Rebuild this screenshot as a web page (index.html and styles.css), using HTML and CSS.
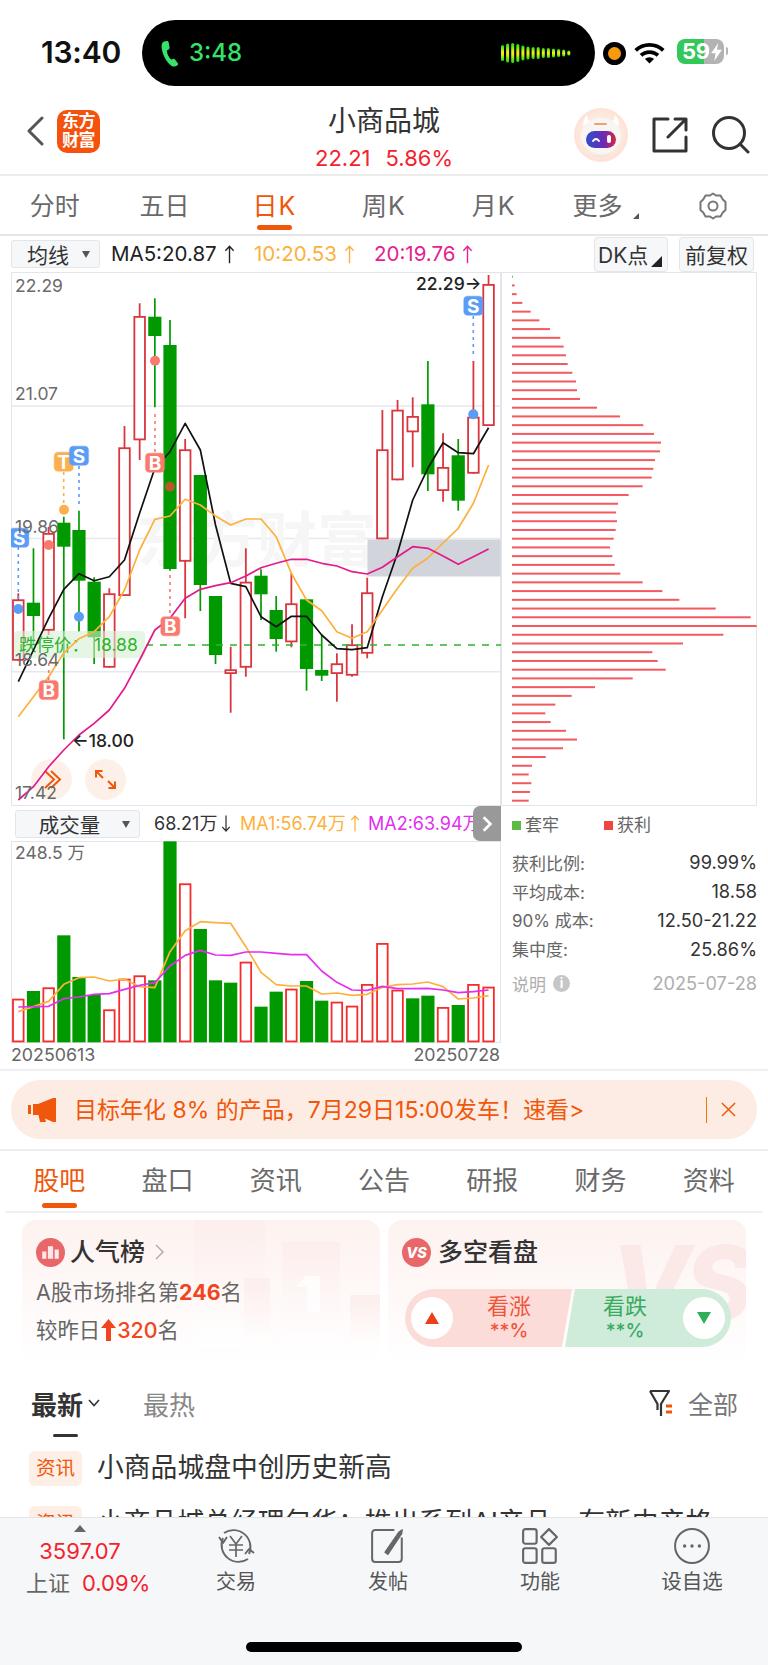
FILE: index.html
```html
<!DOCTYPE html>
<html lang="zh">
<head>
<meta charset="utf-8">
<title>小商品城</title>
<link rel="stylesheet" href="styles.css">
</head>
<body>
<div class="page">
  <div class="status">
    <div class="time">13:40</div>
    <div class="island">
      <svg class="phone" viewBox="0 0 20 27"><path d="M4 1.5 L7 1 C8 1 8.5 1.6 8.7 2.6 L9.6 7.6 C9.7 8.4 9.3 9 8.6 9.4 L6.8 10.4 C7 13.5 8.8 17.4 11.2 19.6 L13 18.9 C13.8 18.6 14.5 18.8 15 19.5 L17.8 23.2 C18.3 24 18.2 24.7 17.5 25.2 L15.8 26.2 C14 27 12 26.5 10.4 25 C5.4 20.6 2 13.6 1.6 6.8 C1.5 4.2 2.2 2.4 4 1.5 Z"/></svg>
      <span class="call">3:48</span>
      <svg class="wave" viewBox="0 0 72 20">
        <defs><linearGradient id="wg" x1="0" y1="0" x2="0" y2="1"><stop offset="0" stop-color="#10e010"/><stop offset=".42" stop-color="#e6f018"/><stop offset=".58" stop-color="#e6f018"/><stop offset="1" stop-color="#10e010"/></linearGradient></defs>
        <g id="wavebars"></g>
      </svg>
    </div>
    <div class="rec"><span class="rec-dot"></span></div>
    <svg class="wifi" viewBox="0 0 33 24"><path d="M16.5 3C10.6 3 5.4 5.3 1.4 9L4 11.7C7.3 8.7 11.7 6.8 16.5 6.8S25.7 8.7 29 11.7L31.6 9C27.6 5.3 22.4 3 16.5 3Z"/><path d="M16.5 10.2C12.7 10.2 9.4 11.6 6.7 14L9.4 16.8C11.3 15.1 13.8 14.1 16.5 14.1S21.7 15.1 23.6 16.8L26.3 14C23.6 11.6 20.3 10.2 16.5 10.2Z"/><path d="M16.5 17.2C14.7 17.2 13.2 17.9 12 19L16.5 23.6 21 19C19.8 17.9 18.3 17.2 16.5 17.2Z"/></svg>
    <div class="battery"><span class="batt-num">59</span><svg class="bolt" viewBox="0 0 12 20"><path d="M8 0 L0 11.5 H5 L3.5 20 L12 7.5 H6.5 Z"/></svg></div>
    <span class="batt-tip"></span>
  </div>

  <header class="head">
    <div class="head-left">
      <svg class="back" viewBox="0 0 18 30"><path d="M16 2 L3 15 L16 28"/></svg>
      <div class="logo">东方<br>财富</div>
    </div>
    <div class="head-mid">
      <div class="stock">小商品城</div>
      <div class="price"><span>22.21</span><span>5.86%</span></div>
    </div>
    <div class="head-right">
      <svg class="avatar" viewBox="0 0 54 54">
        <defs>
          <radialGradient id="ag" cx=".5" cy=".5" r=".55"><stop offset="0" stop-color="#fffaf6"/><stop offset="1" stop-color="#fde0d2"/></radialGradient>
          <linearGradient id="vg" x1="0" y1="0" x2="1" y2="0"><stop offset="0" stop-color="#2e4fc9"/><stop offset=".6" stop-color="#6a2bb5"/><stop offset="1" stop-color="#d8263f"/></linearGradient>
        </defs>
        <circle cx="27" cy="27" r="27" fill="url(#ag)"/>
        <path d="M9 18 C9 12 11 9 13 7 C13 11 15 13 17 14 Z M45 18 C45 12 43 9 41 7 C41 11 39 13 37 14 Z" fill="#fff"/>
        <ellipse cx="27" cy="28" rx="20" ry="18" fill="#f8f6f5"/>
        <rect x="20" y="15" width="13" height="2" rx="1" fill="#f0a06b"/>
        <rect x="12" y="23" width="30" height="17" rx="8.5" fill="url(#vg)"/>
        <path d="M19 33 Q22 29 25 33" class="av-eye"/>
        <rect x="33" y="27" width="4" height="8" rx="2" fill="#fff"/>
        <path d="M16 46 Q27 50 38 46 Q27 53 16 46Z" fill="#e8e4e2"/>
      </svg>
      <svg class="share" viewBox="0 0 36 36"><path d="M16 2 H2 V34 H34 V20"/><path d="M16 20 L34 2 M23 2 H34 V13"/></svg>
      <svg class="search" viewBox="0 0 38 38"><circle cx="17" cy="17" r="15.5"/><path d="M28 28 L36 36"/></svg>
    </div>
  </header>

  <nav class="periods">
    <div class="ptab"><span>分时</span></div>
    <div class="ptab"><span>五日</span></div>
    <div class="ptab on"><span class="kk">日K</span><i class="bar"></i></div>
    <div class="ptab"><span class="kk">周K</span></div>
    <div class="ptab"><span class="kk">月K</span></div>
    <div class="ptab more"><span>更多</span><i class="corner"></i></div>
    <div class="ptab">
      <svg class="gear" viewBox="0 0 28 28"><path d="M14 1.5 L17 3.5 L21.5 3.5 L23.8 7.5 L26.5 10 L26.5 18 L23.8 20.5 L21.5 24.5 L17 24.5 L14 26.5 L11 24.5 L6.5 24.5 L4.2 20.5 L1.5 18 L1.5 10 L4.2 7.5 L6.5 3.5 L11 3.5 Z"/><circle cx="14" cy="14" r="4.5"/></svg>
    </div>
  </nav>

  <div class="tools">
    <div class="sel sel-ma">均线<i class="tri"></i></div>
    <span class="ma m5">MA5:20.87<svg class="ar" viewBox="0 0 12 20"><path d="M6 19.5V1M1.5 6L6 1L10.5 6"/></svg></span>
    <span class="ma m10">10:20.53<svg class="ar" viewBox="0 0 12 20"><path d="M6 19.5V1M1.5 6L6 1L10.5 6"/></svg></span>
    <span class="ma m20">20:19.76<svg class="ar" viewBox="0 0 12 20"><path d="M6 19.5V1M1.5 6L6 1L10.5 6"/></svg></span>
    <div class="btn btn-dk">DK点<i class="corner big"></i></div>
    <div class="btn btn-fq">前复权</div>
  </div>

  <section class="charts">
    <div class="col-k">
      <svg class="kline" viewBox="11 272 490 534">
        <rect x="11.5" y="272.5" width="489" height="533" class="frame"/>
        <path d="M11 406H501M11 538.5H501M11 671.7H501" class="grid"/>
        <text x="137" y="562" class="wm">东方财富</text>
        <rect x="367.5" y="539.5" width="133" height="37" class="pressure"/>
        <g id="candles"></g>
        <rect x="14" y="631" width="131" height="27" rx="4" class="limit-bg"/>
        <text x="19" y="651" class="limit">跌停价： 18.88</text>
        <path d="M146 645H501" class="limit-line"/>
        <circle cx="51.5" cy="779.5" r="20.5" class="cbtn"/>
        <path d="M45 771 L54 779.5 L45 788 M51 771 L60 779.5 L51 788" class="cicon"/>
        <circle cx="105.5" cy="779.5" r="20.5" class="cbtn"/>
        <path d="M96 771 L103 778 M96 777.5V771H102.5 M115 788 L108 781 M115 781.5V788H108.5" class="cicon"/>
        <g id="ma"></g>
        <g id="marks"></g>
        <text x="15" y="291.5" class="ax">22.29</text>
        <text x="15" y="400" class="ax">21.07</text>
        <text x="15" y="533" class="ax">19.86</text>
        <text x="15" y="666" class="ax">18.64</text>
        <text x="15" y="799" class="ax">17.42</text>
        <text x="416" y="290" class="hl">22.29→</text>
        <text x="72" y="747" class="hl">←18.00</text>
      </svg>
      <div class="vtools">
        <div class="sel sel-vol">成交量<i class="tri"></i></div>
        <span class="vm v0">68.21万<svg class="ar" viewBox="0 0 12 20"><path d="M6 .5V19M1.5 14L6 19L10.5 14"/></svg></span>
        <span class="vm v1">MA1:56.74万<svg class="ar" viewBox="0 0 12 20"><path d="M6 19.5V1M1.5 6L6 1L10.5 6"/></svg></span>
        <span class="vm v2">MA2:63.94万<svg class="ar" viewBox="0 0 12 20"><path d="M6 19.5V1M1.5 6L6 1L10.5 6"/></svg></span>
      </div>
      <svg class="vol" viewBox="11 841 490 203">
        <rect x="11.5" y="841.5" width="489" height="201" class="frame"/>
        <g id="vbars"></g>
        <text x="15" y="859" class="ax">248.5 万</text>
      </svg>
      <div class="dates"><span>20250613</span><span>20250728</span></div>
      <div class="fold"><svg viewBox="0 0 10 16"><path d="M2 2 L8 8 L2 14"/></svg></div>
    </div>
    <div class="col-chip">
      <svg class="chip" viewBox="501 272 256 534">
        <rect x="501.5" y="272.5" width="255" height="533" class="frame"/>
        <g id="chipbars"></g>
      </svg>
      <div class="legend">
        <span class="lg"><i class="sq sq-g"></i>套牢</span>
        <span class="lg"><i class="sq sq-r"></i>获利</span>
      </div>
      <dl class="stats">
        <div class="row"><dt>获利比例:</dt><dd>99.99%</dd></div>
        <div class="row"><dt>平均成本:</dt><dd>18.58</dd></div>
        <div class="row"><dt>90% 成本:</dt><dd>12.50-21.22</dd></div>
        <div class="row"><dt>集中度:</dt><dd>25.86%</dd></div>
      </dl>
      <div class="note"><span class="note-l">说明<i class="info">i</i></span><span>2025-07-28</span></div>
    </div>
  </section>

  <div class="sep"></div>
  <div class="banner">
    <svg class="horn" viewBox="0 0 28 24"><path d="M0 7H3V16H0Z M5 6 H10 L25 0 H28 V24 H25 L17 20.5 L18 24 H12 L10.5 17 H5 Z"/></svg>
    <span class="banner-t">目标年化 8% 的产品，7月29日15:00发车！速看&gt;</span>
    <i class="banner-div"></i>
    <svg class="close" viewBox="0 0 16 16"><path d="M1 1 L15 15 M15 1 L1 15"/></svg>
  </div>
  <div class="sep2"></div>

  <nav class="subtabs">
    <div class="stab on"><span>股吧</span><i class="bar"></i></div>
    <div class="stab"><span>盘口</span></div>
    <div class="stab"><span>资讯</span></div>
    <div class="stab"><span>公告</span></div>
    <div class="stab"><span>研报</span></div>
    <div class="stab"><span>财务</span></div>
    <div class="stab"><span>资料</span></div>
  </nav>

  <main class="content">
    <div class="cards">
      <article class="card">
        <div class="deco">
          <i class="d1"></i><i class="d2"></i><i class="d3"></i><i class="d4"></i><i class="d5"></i>
        </div>
        <div class="card-h">
          <svg class="cicon-s" viewBox="0 0 28 28"><circle cx="14" cy="14" r="14" class="c-red"/><path d="M6 20V13H10V20ZM11.5 20V8H16.5V20ZM18 20V11H22V20Z" fill="#fff" opacity=".85"/></svg>
          <span class="card-t">人气榜</span>
          <svg class="go" viewBox="0 0 9 16"><path d="M1 1 L8 8 L1 15"/></svg>
        </div>
        <p class="line l1">A股市场排名第<b>246</b>名</p>
        <p class="line l2">较昨日<svg class="arrow" viewBox="0 0 15 22"><path d="M7.5 0 L15 9 H10 V22 H5 V9 H0 Z"/></svg><em>320</em>名</p>
      </article>
      <article class="card">
        <div class="vs">VS</div>
        <div class="card-h">
          <svg class="cicon-s" viewBox="0 0 28 28"><circle cx="14" cy="14" r="14" class="c-red"/><text x="14" y="19.5" class="vs-t">VS</text></svg>
          <span class="card-t ct2">多空看盘</span>
        </div>
        <div class="pk">
          <div class="pk-l"><i class="pk-c"><svg viewBox="0 0 14 12"><path d="M7 0 L14 12 H0 Z"/></svg></i><div class="pk-x"><span>看涨</span><small>**%</small></div></div>
          <div class="pk-r"><div class="pk-x"><span>看跌</span><small>**%</small></div><i class="pk-c"><svg viewBox="0 0 14 12"><path d="M0 0 H14 L7 12 Z"/></svg></i></div>
        </div>
      </article>
    </div>

    <div class="sort">
      <div class="sort-a"><span>最新</span><svg viewBox="0 0 12 8"><path d="M1 1 L6 6.5 L11 1"/></svg><i class="bar"></i></div>
      <div class="sort-b">最热</div>
      <div class="sort-c">
        <svg class="filter" viewBox="0 0 26 28"><path d="M2 2 H21 L13 15 V27 M2 2 L9.5 15 V21"/><path d="M18 17 H24 M18 23 H24" class="f-o"/></svg>
        <span>全部</span>
      </div>
    </div>

    <div class="news"><span class="tag">资讯</span><span class="ntitle">小商品城盘中创历史新高</span></div>
    <div class="news"><span class="tag">资讯</span><span class="ntitle">小商品城总经理包华：推出系列AI产品，有新中产格</span></div>
  </main>

  <footer class="bottom">
    <div class="idx">
      <i class="idx-up"></i>
      <div class="idx-v">3597.07</div>
      <div class="idx-n"><span>上证</span><b>0.09%</b></div>
    </div>
    <div class="bt">
      <svg viewBox="0 0 40 36"><path d="M8 5 A17 17 0 0 1 33 26 M32 31 A17 17 0 0 1 7 10"/><path d="M3 9 L7 15 L11 9 M29 26 L33 21 L38 25"/><path d="M14 8 L20 16 L26 8 M13 17 H27 M13 22 H27 M20 16 V29" class="thin"/></svg>
      <span>交易</span>
    </div>
    <div class="bt">
      <svg viewBox="0 0 36 34"><path d="M24 2 H6 Q3 2 3 5 V29 Q3 32 6 32 H28 Q31 32 31 29 V9"/><path d="M15 23 L28 4 L31.5 1.5 L31 5.5 L18 25 Z" class="pen"/></svg>
      <span>发帖</span>
    </div>
    <div class="bt">
      <svg viewBox="0 0 32 32"><rect x="1" y="1" width="12" height="13" rx="2"/><rect x="1" y="18" width="12" height="13" rx="2"/><rect x="18" y="18" width="12" height="13" rx="2"/><path d="M24 1 L31 8 L24 15 L17 8 Z"/></svg>
      <span>功能</span>
    </div>
    <div class="bt">
      <svg viewBox="0 0 34 34"><circle cx="17" cy="17" r="16"/><circle cx="10" cy="17" r="1.6" class="dot"/><circle cx="17" cy="17" r="1.6" class="dot"/><circle cx="24" cy="17" r="1.6" class="dot"/></svg>
      <span class="bt-w">设自选</span>
    </div>
    <div class="home"></div>
  </footer>
</div>
<script src="chart.js"></script>
</body>
</html>
```
FILE: styles.css
```css
*{box-sizing:border-box}
html,body{margin:0;padding:0;background:#fff}
.page{width:768px;height:1665px;overflow:hidden;display:flex;flex-direction:column;position:relative;font-family:Inter,"Noto Sans CJK SC",sans-serif;color:#333}
i,em{font-style:normal}
svg{display:block}

/* status */
.status{height:100px;flex:none;display:flex;align-items:flex-start;padding-left:41px}
.time{width:101px;margin-top:34px;font-size:30px;line-height:36px;font-weight:600;color:#111;letter-spacing:-.2px}
.island{width:453px;height:66px;margin-top:20px;background:#000;border-radius:33px;display:flex;align-items:center;padding:0 22px 0 18px;color:#35e36b}
.phone{width:20px;height:27px;fill:#35e36b}
.call{margin-left:9px;font-size:24px;font-weight:500;line-height:30px}
.wave{width:72px;height:20px;margin-left:auto}
.rec{width:23px;height:23px;margin:42px 0 0 8px;background:#000;border-radius:50%;display:flex;align-items:center;justify-content:center}
.rec-dot{width:13px;height:13px;border-radius:50%;background:#f79a0e}
.wifi{width:33px;height:24px;margin:40px 0 0 7px;fill:#000}
.battery{position:relative;width:47px;height:25px;margin:39px 0 0 11px;border-radius:8px;background:linear-gradient(90deg,#34c759 0,#34c759 58%,#b3b3b3 58%,#b3b3b3 100%);display:flex;align-items:center;color:#fff}
.batt-num{font-size:22px;font-weight:700;line-height:25px;margin-left:5px;letter-spacing:-.3px}
.bolt{width:11px;height:18px;fill:#fff;margin-left:1px}
.batt-tip{width:2px;height:8px;margin:47px 0 0 2px;background:#b3b3b3;border-radius:0 2px 2px 0}

/* header */
.head{height:76px;flex:none;display:grid;grid-template-columns:1fr auto 1fr;border-bottom:2px solid #ececec}
.head-left{display:flex;align-items:center;padding:0 0 12px 26px;gap:13px}
.back{width:18px;height:30px;fill:none;stroke:#555;stroke-width:3;stroke-linecap:round;stroke-linejoin:round}
.logo{width:43px;height:43px;background:#f4520d;border-radius:10px;color:#fff;font-size:17px;line-height:19.5px;font-weight:700;text-align:center;padding-top:2px;letter-spacing:-.5px}
.head-mid{text-align:center;padding-top:5px}
.stock{font-size:28px;line-height:32px;color:#333}
.price{margin-top:8px;font-size:22px;line-height:27px;color:#f5222d;display:flex;justify-content:center;gap:15px}
.head-right{display:flex;justify-content:flex-end;align-items:flex-start;padding:8px 18px 0 0}
.avatar{width:54px;height:54px}
.av-eye{fill:none;stroke:#fff;stroke-width:2;stroke-linecap:round}
.share{width:36px;height:36px;margin:9px 0 0 24px;fill:none;stroke:#333;stroke-width:3;stroke-linejoin:round;stroke-linecap:round}
.search{width:38px;height:38px;margin:8px 0 0 24px;fill:none;stroke:#333;stroke-width:3;stroke-linecap:round}

/* periods */
.periods{height:60px;flex:none;display:flex;border-bottom:2px solid #e6e6e8}
.ptab{width:110px;padding-top:13px;display:flex;flex-direction:column;align-items:center;font-size:25px;line-height:34px;color:#6a6a6a;position:relative}
.kk{letter-spacing:1px}
.ptab.on{color:#f0570a}
.ptab .bar{width:35px;height:5px;margin-top:2px}
.bar{display:block;background:#f0570a;border-radius:3px}
.more span{margin-left:-12px}
.corner{position:absolute;width:0;height:0;border-style:solid;border-width:0 0 6px 6px;border-color:transparent transparent #555 transparent;left:84px;top:37px}
.gear{width:28px;height:28px;margin-top:3px;fill:none;stroke:#777;stroke-width:2;stroke-linejoin:round}

/* tools */
.tools{height:36px;flex:none;display:flex;align-items:center;padding-left:11px;position:relative}
.sel{background:#f6f7f9;border:1px solid #e3e5e9;border-radius:3px;display:flex;align-items:center;justify-content:center;position:relative;color:#333;font-size:21px}
.sel-ma{width:89px;height:28px;padding-right:15px}
.tri{position:absolute;right:9px;top:50%;margin-top:-3px;width:0;height:0;border-style:solid;border-width:7px 4px 0 4px;border-color:#555 transparent transparent transparent}
.ma{font-size:20.5px;line-height:28px;white-space:nowrap;display:flex;align-items:center}
.ar{width:11px;height:19px;margin-left:7px;fill:none;stroke:currentColor;stroke-width:1.5;flex:none}
.m5{margin-left:11px;color:#222;width:143px}
.m10{color:#fdb13c;width:120px}
.m20{color:#e61e90;width:220px}
.btn{height:35px;background:#f6f7f9;border:1px solid #e3e5e9;border-radius:4px;display:flex;align-items:center;justify-content:center;font-size:21px;color:#333;position:relative}
.btn-dk{width:74px;margin-right:11px;padding-left:3px;white-space:nowrap;justify-content:flex-start}
.btn-fq{width:75px}
.corner.big{left:auto;right:5px;top:auto;bottom:4px;border-width:0 0 11px 11px;border-bottom-color:#222}

/* charts */
.charts{display:flex;height:797px;flex:none}
.col-k{width:501px;padding-left:11px;position:relative;flex:none}
.col-chip{width:267px;flex:none}
.kline{width:490px;height:534px}
.chip{width:256px;height:534px}
.frame{fill:#fff;stroke:#e3e5ec;stroke-width:1}
.grid{stroke:#e6e8ef;stroke-width:1.5;fill:none}
.wm{font:700 60px "Noto Sans CJK SC",sans-serif;fill:#f6f6f6}
.pressure{fill:#d1d4db}
.ax{font-family:Inter,"Noto Sans CJK SC",sans-serif;font-size:17.5px;fill:#6a6a6a}
.hl{font-family:Inter,"Liberation Sans",sans-serif;font-size:17.5px;font-weight:500;fill:#222}
.limit-bg{fill:#d7f0d2;opacity:.6}
.limit{font-family:Inter,"Noto Sans CJK SC",sans-serif;font-size:17.5px;fill:#2db52d}
.limit-line{stroke:#2db52d;stroke-width:1.5;stroke-dasharray:7 7;fill:none}
.cbtn{fill:#fdeee7;fill-opacity:.9}
.cicon{fill:none;stroke:#f0570a;stroke-width:2}
.c-r{stroke:#d9363e;fill:#fff;stroke-width:1.8}
.c-g{fill:#009a00}
.w-g{stroke:#009a00;stroke-width:1.7}
.w-r{stroke:#d9363e;stroke-width:1.8}
.ln{fill:none;stroke-width:1.7;stroke-linejoin:round}
.l-k{stroke:#111}
.l-o{stroke:#fdb13c}
.l-p{stroke:#e31a8c}
.l-m{stroke:#e32ff0}
.dash{stroke-width:1.6;stroke-dasharray:3 4;fill:none}
.mk{font:700 19px Inter,sans-serif;fill:#fff;text-anchor:middle}
.v-r{stroke:#f72b2b;fill:#fff;stroke-width:1.8}
.chip-b{fill:#f25960}
.chip-g{fill:#5cc45c}

.vtools{height:35px;display:flex;align-items:center;padding-left:4px;white-space:nowrap;overflow:hidden}
.sel-vol{width:125px;height:28px;padding-right:16px;font-size:20.5px}
.vm{font-size:18px;line-height:24px;display:flex;align-items:center;flex:none}
.vm .ar{height:17px;width:10px;margin-left:4px}
.v0{margin-left:14px;width:86px;color:#333}
.v1{color:#fdb13c;width:128px}
.v2{color:#e32ff0}
.vol{width:490px;height:203px}
.dates{display:flex;justify-content:space-between;font-size:17.8px;line-height:22px;color:#666;padding-right:1px}
.fold{position:absolute;left:473px;top:534px;width:28px;height:35px;background:#999;border-radius:7px 0 0 7px;display:flex;align-items:center;justify-content:center}
.fold svg{width:12px;height:18px;fill:none;stroke:#fff;stroke-width:2.4}

.legend{display:flex;height:24px;margin:7px 0 11px;padding-left:11px;color:#666;font-size:17px;line-height:24px}
.lg{display:flex;align-items:center;gap:4px;width:92px}
.sq{width:9px;height:9px}
.sq-g{background:#5bbd45}
.sq-r{background:#ee4444}
.stats{margin:0;width:256px;padding-left:11px}
.row{display:flex;justify-content:space-between;height:28.8px;align-items:center;font-size:17px}
.row dt{color:#666}
.row dd{margin:0;color:#333;font-size:18.2px}
.note{width:256px;padding-left:11px;margin-top:6px;height:28px;display:flex;align-items:center;justify-content:space-between;font-size:18.2px;color:#aeaeae}
.note-l{display:flex;align-items:center;gap:7px;font-size:17px}
.info{width:17px;height:17px;border-radius:50%;background:#c6c6c6;color:#fff;font-size:13px;font-weight:700;line-height:17px;text-align:center}

/* banner */
.sep{height:2px;flex:none;background:#f0f0f2}
.banner{height:59px;flex:none;margin:9px 11px 0;background:#fdece4;border-radius:29px;display:flex;align-items:center;padding-left:17px;color:#f0570a}
.horn{width:28px;height:24px;fill:#f0570a}
.banner-t{margin-left:18px;font-size:23px;line-height:30px;white-space:nowrap}
.banner-div{width:1.5px;height:26px;background:#f0770a;margin-left:auto}
.close{width:15px;height:15px;margin:0 21px 0 14px;fill:none;stroke:#f0570a;stroke-width:1.6}
.sep2{height:2px;flex:none;margin-top:10px;background:#eeeef0}

.subtabs{height:62px;flex:none;display:flex;margin:0 5px;border-bottom:2px solid #f0f0f2}
.stab{flex:1;padding-top:13px;display:flex;flex-direction:column;align-items:center;font-size:26px;line-height:34px;color:#6a6a6a}
.stab.on{color:#f0570a}
.stab .bar{width:35px;height:5px;margin-top:5px}

.content{flex:1;min-height:0;overflow:hidden}
.cards{display:flex;gap:8px;padding:7px 22px 0}
.card{width:358px;height:144px;border-radius:14px;background:linear-gradient(#fdf2f0,#fff);position:relative;overflow:hidden;padding:16px 0 0 14px}
.deco i{position:absolute;display:block;background:linear-gradient(#fceeec,#fff)}
.d1{left:172px;top:0;width:71px;height:128px}
.d2{left:260px;top:22px;width:58px;height:106px}
.d3{left:222px;top:58px;width:26px;height:70px}
.d4{left:328px;top:75px;width:30px;height:54px}
.deco .d5{left:274px;top:56px;width:24px;height:36px;background:#fff;opacity:.7;clip-path:polygon(40% 0,100% 0,100% 100%,45% 100%,45% 30%,0 30%)}
.vs{position:absolute;left:222px;top:-2px;font:italic 800 104px/130px Inter,sans-serif;color:#fbe9e7;letter-spacing:-6px;white-space:nowrap;width:136px;overflow:hidden}
.card-h{display:flex;align-items:center;position:relative;height:32px}
.cicon-s{width:29px;height:29px}
.c-red{fill:#e8686a}
.vs-t{font:italic 800 14px Inter,sans-serif;fill:#fff;text-anchor:middle}
.card-t{margin-left:5px;font-size:25px;line-height:32px;font-weight:500;color:#333}
.ct2{margin-left:7px}
.go{width:9px;height:16px;margin-left:10px;fill:none;stroke:#aaa;stroke-width:1.4}
.line{margin:0;position:relative;font-size:21.4px;line-height:30px;color:#666;display:flex;align-items:center}
.l1{margin-top:9px}
.l2{margin-top:8px}
.line b,.line em{color:#f0451e;font-weight:700}
.line em{font-weight:500}
.arrow{width:15px;height:22px;fill:#f0451e;margin:0 1px 0 1px}
.pk{position:relative;display:flex;width:326px;height:58px;margin:21px 0 0 3px;border-radius:29px;overflow:hidden}
.pk-l{flex:none;width:167px;background:#fcdcd9;clip-path:polygon(0 0,100% 0,94% 100%,0 100%);display:flex;align-items:center;padding-left:6px;color:#f0553a}
.pk-r{flex:1;margin-left:-7px;background:#cfebd9;clip-path:polygon(6% 0,100% 0,100% 100%,0 100%);display:flex;align-items:center;padding-right:6px;color:#3aaa62;justify-content:space-between}
.pk-c{width:42px;height:42px;border-radius:50%;background:#fff;display:flex;align-items:center;justify-content:center;flex:none}
.pk-c svg{width:14px;height:12px}
.pk-l svg{fill:#e8401c}
.pk-r svg{fill:#2fae5a}
.pk-x{display:flex;flex-direction:column;align-items:center;line-height:1}
.pk-l .pk-x{margin-left:34px}
.pk-r .pk-x{margin-left:38px}
.pk-x span{font-size:22px;line-height:25px}
.pk-x small{font-size:19px;line-height:22px;font-weight:500;margin-top:1px}

.sort{display:flex;height:70px;padding:23px 30px 0 31px;position:relative}
.sort-a{display:flex;height:32px;align-items:center;font-size:26px;font-weight:700;color:#333;position:relative}
.sort-a svg{width:12px;height:8px;margin-left:5px;fill:none;stroke:#333;stroke-width:1.6}
.sort-a .bar{position:absolute;left:22px;top:47px;width:25px;height:3px;background:#333}
.sort-b{margin:3px 0 0 43px;font-size:26px;line-height:32px;color:#888}
.sort-c{margin-left:auto;display:flex;align-items:center;height:32px;font-size:25px;color:#777}
.filter{width:26px;height:28px;margin-right:14px;fill:none;stroke:#333;stroke-width:2.2;stroke-linejoin:round}
.f-o{stroke:#f0570a;stroke-width:3}
.news{display:flex;align-items:center;padding-left:29px;height:35px;margin-bottom:20px;white-space:nowrap;margin-top:17px}
.news+.news{margin-top:0}
.tag{width:53px;height:35px;border-radius:6px;background:#fdeee6;color:#f0570a;font-size:19.5px;line-height:35px;text-align:center;flex:none}
.ntitle{margin:-2px 0 0 15px;font-size:26.8px;line-height:35px;color:#333}

/* bottom */
.bottom{height:148px;flex:none;background:#f6f7f9;border-top:1.5px solid #e3e4e7;display:flex;position:relative}
.idx{width:160px;position:relative;display:flex;flex-direction:column;align-items:center;padding-top:7px}
.idx-up{width:0;height:0;border-style:solid;border-width:0 6px 7px 6px;border-color:transparent transparent #666 transparent}
.idx-v{margin-top:5px;font-size:22px;line-height:28px;color:#f5222d}
.idx-n{margin-top:3px;display:flex;gap:12px;font-size:22px;line-height:30px;white-space:nowrap;align-self:flex-start;padding-left:26px;color:#666}
.idx-n b{font-weight:400;color:#f5222d}
.bt{width:152px;display:flex;flex-direction:column;align-items:center;padding-top:10px;font-size:20px;color:#555}
.bt svg{height:36px;width:40px;fill:none;stroke:#666;stroke-width:1.9;stroke-linejoin:round}
.bt span{margin-top:4px;line-height:28px}
.bt-w{font-size:20.5px}
.bt .thin{stroke-width:1.7}
.bt .dot{fill:#666;stroke:none}
.bt .pen{stroke-width:1;fill:#666}
.home{position:absolute;left:246px;top:124px;width:276px;height:10px;border-radius:5px;background:#000}
```
FILE: chart.js
```js
(function () {
  var NS = 'http://www.w3.org/2000/svg';
  function el(parent, tag, attrs, txt) {
    var e = document.createElementNS(NS, tag);
    for (var k in attrs) e.setAttribute(k, attrs[k]);
    if (txt) e.textContent = txt;
    parent.appendChild(e);
    return e;
  }
  function cx(i) { return 18.3 + 15.17 * i; }

  // type, open(body top), close(body bottom), wick top, wick bottom
  var K = [
    ['r',599.3,660.7,593.3,660.7],['g',602.7,616,548.3,645],['r',533,630.7,527,635],['g',522.7,546.7,516.7,739.3],
    ['g',530,580.7,510.7,631.7],['g',581.7,637.3,577.3,664],['r',593.3,667.7,588.3,667.7],['r',447.3,596,426,596],
    ['r',316,440.3,303.3,460],['g',316.7,336,298.3,407.3],['g',345,569,320,570.7],['r',449.3,561.7,439,618.3],
    ['g',475,585,475,611],['g',596,655,596,664],['r',669.3,674,646.7,712.7],['r',581.7,667.7,548.3,676.7],
    ['g',575.7,594.3,569.3,620],['g',610,639,596,651.7],['r',603.3,642.3,573.3,647.3],['g',599.3,669,599.3,690.7],
    ['g',670,675.7,635,681],['r',663.3,674,653.3,701.7],['r',644.3,675.7,624.3,676.7],['r',592.3,653.7,577.7,658.3],
    ['r',449.3,539.3,410,539.3],['r',409.7,480.3,400,480.3],['r',416,432.3,397.3,467.3],['g',404.3,474.3,361,491],
    ['r',467,491,433.3,501.7],['g',455.3,500.7,439,510.7],['r',416.7,473.7,361,473.7],['r',284,426,275,426]
  ];
  var g = document.getElementById('candles');
  K.forEach(function (c, i) {
    var x = cx(i), red = c[0] === 'r';
    el(g, 'line', { x1: x, x2: x, y1: c[3], y2: c[4], 'class': red ? 'w-r' : 'w-g' });
    if (red) el(g, 'rect', { x: x - 5.3, y: c[1] + .9, width: 10.6, height: c[2] - c[1] - 1.8, 'class': 'c-r' });
    else el(g, 'rect', { x: x - 6.6, y: c[1], width: 13.2, height: c[2] - c[1], 'class': 'c-g' });
  });

  function poly(parent, ys, cls) {
    el(parent, 'polyline', { points: ys.map(function (y, i) { return cx(i) + ',' + y; }).join(' '), 'class': 'ln ' + cls });
  }
  var ma = document.getElementById('ma');
  poly(ma, [681.7,650,618.3,589.3,573.7,580.7,576.7,560,513,468.3,451.7,423.3,450,525,583.3,586.7,616.7,626.7,616.3,616.3,635,648.7,649.7,647.7,596.7,553,500,468.3,442.7,452.7,453.7,427.7], 'l-k');
  poly(ma, [716.7,696.7,676.7,653,638.7,631.7,616.7,590,550,519.3,516,499.3,505,516,525,519,519,536.7,573.3,600,610.7,631.7,638.3,631.7,610,588.3,568.3,558,543,528.3,503.3,465], 'l-o');
  poly(ma, [800,786.7,766.7,750,735,723.3,710,688.3,660,630,618.3,598.3,589.3,585.7,582.7,576,567.7,563.3,559.3,559.3,563.3,566,571.7,574,567.3,556.7,546.7,548.3,556,564.3,556.7,549], 'l-p');

  var m = document.getElementById('marks');
  var blue = '#5b9cf6', pink = '#f97a6e', org = '#fbb04f';
  function dash(x, y1, y2, col) { el(m, 'line', { x1: x, x2: x, y1: y1, y2: y2, stroke: col, 'class': 'dash' }); }
  function dot(x, y, col) { el(m, 'circle', { cx: x, cy: y, r: 5, fill: col }); }
  function mark(x, y, t, col) {
    el(m, 'rect', { x: x - 9.5, y: y - 9.5, width: 19, height: 19, rx: 4, fill: col, stroke: col, 'stroke-opacity': .35, 'stroke-width': 1.5 });
    el(m, 'text', { x: x, y: y + 7, 'class': 'mk' }, t);
  }
  dash(18.3, 547, 600, blue); dot(18.3, 609, blue); mark(19.3, 537.7, 'S', blue);
  dash(63.7, 472, 505, org); dot(64, 509.7, org); mark(63.7, 461.7, 'T', org);
  dash(79, 466, 505, blue); dot(79, 616.7, blue); mark(79, 455.7, 'S', blue);
  dot(48.7, 545, pink); dash(48.7, 663, 680, pink); mark(48.7, 690, 'B', pink);
  dot(155, 360.7, pink); dash(155, 414, 452, pink); mark(155, 462.7, 'B', pink);
  dot(170, 486.7, '#b5582a'); dash(170, 575, 615, pink); mark(170.3, 626.3, 'B', pink);
  dash(473.3, 316, 355, blue); dot(473.3, 414.3, blue); mark(473.3, 305.7, 'S', blue);

  var V = [['r',596],['g',573],['r',562],['g',406],['g',531],['g',585],['r',628],['r',536],['r',526],['g',541],['g',124],['r',250],['g',387],['g',541],['g',548],['r',485],['g',620],['g',575],['r',566],['g',543],['g',602],['r',605],['r',617],['r',552],['r',429],['r',569],['g',595],['g',587],['r',621],['g',615],['r',552],['r',560]];
  var vb = document.getElementById('vbars');
  V.forEach(function (b, i) {
    var x = cx(i), y = 800 + b[1] / 3, bot = 800 + 727 / 3;
    if (b[0] === 'r') el(vb, 'rect', { x: x - 5.3, y: y + .9, width: 10.6, height: bot - y - 1.8, 'class': 'v-r' });
    else el(vb, 'rect', { x: x - 6.6, y: y, width: 13.2, height: bot - y, 'class': 'c-g' });
  });
  function vy(a) { return a.map(function (z) { return 800 + z / 3; }); }
  poly(vb, vy([635,620,604,553,533,531,543,537,560,563,455,392,365,368,370,440,517,554,558,558,582,579,586,583,562,554,552,546,560,597,594,587]), 'l-o');
  poly(vb, vy([621,620,619,596,591,583,581,568,556,548,498,466,451,465,466,456,456,460,464,464,513,547,570,571,559,566,566,565,570,578,575,570]), 'l-m');

  var W = [3,8,14,31,56,82,114,145,155,162,167,181,192,195,204,255,324,394,426,447,444,429,424,419,392,350,318,312,315,311,305,294,301,308,325,392,451,502,611,716,734,634,513,421,437,461,362,249,179,130,100,116,162,195,153,101,60,50,58,54,50];
  var ch = document.getElementById('chipbars');
  W.forEach(function (w, i) {
    el(ch, 'rect', { x: 512, y: 275.7 + 8.733 * i, width: w / 3, height: 2, 'class': i === 0 ? 'chip-g' : 'chip-b' });
  });

  var wb = document.getElementById('wavebars');
  [16,19,20,18,15,13,12,12,10,10,9,8,7,5].forEach(function (h, i) {
    el(wb, 'rect', { x: i * 5.1, y: 10 - h / 2, width: 3, height: h, rx: 1.5, fill: 'url(#wg)' });
  });
})();
```
